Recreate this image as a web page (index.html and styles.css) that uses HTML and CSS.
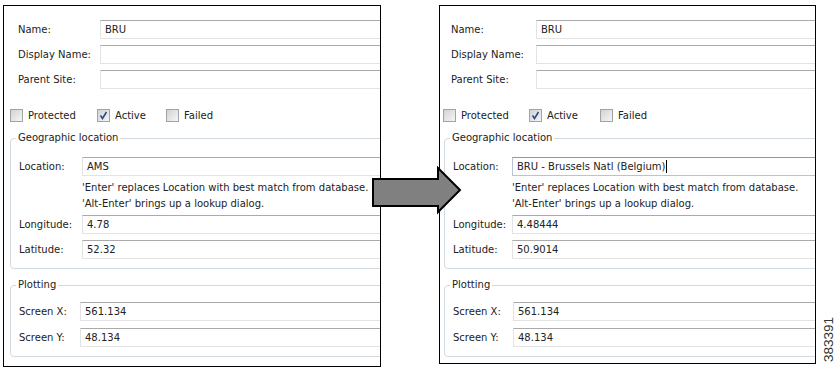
FILE: index.html
```html
<!DOCTYPE html>
<html lang="en">
<head>
    <meta charset="UTF-8">
    <title>Site properties - location lookup</title>
    <link rel="stylesheet" href="styles.css">
</head>
<body>
    <div class="figure">
        <section class="panel panel--before">
            <div class="form">
                <div class="fields">
                    <span class="field-label">Name:</span>
                    <div class="text-field">BRU</div>
                    <span class="field-label">Display Name:</span>
                    <div class="text-field"></div>
                    <span class="field-label">Parent Site:</span>
                    <div class="text-field"></div>
                </div>

                <div class="checks">
                    <span class="check"><span class="check-box"></span>Protected</span>
                    <span class="check"><span class="check-box is-checked"><svg viewBox="0 0 11 11"><path d="M2.5 5.5 L4.5 8.5 L8.5 2"/></svg></span>Active</span>
                    <span class="check"><span class="check-box"></span>Failed</span>
                </div>

                <fieldset class="group group--geo">
                    <legend>Geographic location</legend>
                    <div class="group-grid">
                        <span class="field-label">Location:</span>
                        <div class="text-field">AMS</div>
                        <p class="hint">'Enter' replaces Location with best match from database.<br>'Alt-Enter' brings up a lookup dialog.</p>
                        <span class="field-label row-lon">Longitude:</span>
                        <div class="text-field row-lon">4.78</div>
                        <span class="field-label row-lat">Latitude:</span>
                        <div class="text-field row-lat">52.32</div>
                    </div>
                </fieldset>

                <fieldset class="group group--plot">
                    <legend>Plotting</legend>
                    <div class="group-grid">
                        <span class="field-label">Screen X:</span>
                        <div class="text-field">561.134</div>
                        <span class="field-label row-y">Screen Y:</span>
                        <div class="text-field row-y">48.134</div>
                    </div>
                </fieldset>
            </div>
        </section>

        <!-- arrow sits on top of both panel borders -->
        <svg class="arrow" viewBox="0 0 92 50" width="92" height="50">
            <polygon points="2,13 67,13 67,2 89,24 67,46 67,40 2,40"/>
        </svg>

        <section class="panel panel--after">
            <div class="form">
                <div class="fields">
                    <span class="field-label">Name:</span>
                    <div class="text-field">BRU</div>
                    <span class="field-label">Display Name:</span>
                    <div class="text-field"></div>
                    <span class="field-label">Parent Site:</span>
                    <div class="text-field"></div>
                </div>

                <div class="checks">
                    <span class="check"><span class="check-box"></span>Protected</span>
                    <span class="check"><span class="check-box is-checked"><svg viewBox="0 0 11 11"><path d="M2.5 5.5 L4.5 8.5 L8.5 2"/></svg></span>Active</span>
                    <span class="check"><span class="check-box"></span>Failed</span>
                </div>

                <fieldset class="group group--geo">
                    <legend>Geographic location</legend>
                    <div class="group-grid">
                        <span class="field-label">Location:</span>
                        <div class="text-field is-focused">BRU - Brussels Natl (Belgium)<span class="caret"></span></div>
                        <p class="hint">'Enter' replaces Location with best match from database.<br>'Alt-Enter' brings up a lookup dialog.</p>
                        <span class="field-label row-lon">Longitude:</span>
                        <div class="text-field row-lon">4.48444</div>
                        <span class="field-label row-lat">Latitude:</span>
                        <div class="text-field row-lat">50.9014</div>
                    </div>
                </fieldset>

                <fieldset class="group group--plot">
                    <legend>Plotting</legend>
                    <div class="group-grid">
                        <span class="field-label">Screen X:</span>
                        <div class="text-field">561.134</div>
                        <span class="field-label row-y">Screen Y:</span>
                        <div class="text-field row-y">48.134</div>
                    </div>
                </fieldset>
            </div>
        </section>

        <span class="figure-id">383391</span>
    </div>
</body>
</html>
```

FILE: styles.css
```css
:root {
    --texto: #222222;
    --borde-campo: #e3e3e3;
    --borde-campo-top: #aaaaaa;
    --borde-grupo: #d3dadf;
}

* {
    margin: 0;
    padding: 0;
    box-sizing: border-box;
}

body {
    background: #fff;
    font-family: "DejaVu Sans", Verdana, sans-serif;
    font-size: 10px;
    color: var(--texto);
}

.figure {
    position: relative;
    display: flex;
    align-items: flex-start;
    padding: 5px 0 0 3px;
    width: 840px;
    height: 374px;
}

.panel {
    border: 1px solid #000;
    background: #fff;
    overflow: hidden;
    flex: none;
}

.panel--before {
    width: 378px;
    height: 362px;
}

.panel--after {
    width: 377px;
    height: 359px;
    margin-left: 58px;
}

.form {
    width: 640px;
}

/* top rows */
.fields {
    display: grid;
    grid-template-columns: 82px 1fr;
    row-gap: 6px;
    align-items: center;
    padding: 14px 0 0 14px;
}

.field-label {
    white-space: nowrap;
    line-height: 19px;
}

.text-field {
    height: 19px;
    line-height: 17px;
    padding: 0 4px;
    border: 1px solid var(--borde-campo);
    border-top-color: var(--borde-campo-top);
    background: #fff;
    white-space: nowrap;
}

.text-field.is-focused {
    border-color: #b4c6d6;
    border-top-color: #7f9db9;
}

.caret {
    display: inline-block;
    width: 1px;
    height: 13px;
    background: #000;
    vertical-align: -3px;
    margin-left: 1px;
}

/* checkboxes */
.checks {
    display: grid;
    grid-template-columns: 87px 69px auto;
    margin-top: 19px;
    padding-left: 6px;
    line-height: 15px;
}

.check {
    display: flex;
    align-items: center;
    gap: 5px;
}

.check-box {
    width: 13px;
    height: 13px;
    border: 1px solid #a3a3a3;
    background: linear-gradient(135deg, #d2d2d2, #f6f6f6);
    display: flex;
    align-items: center;
    justify-content: center;
}

.check-box svg {
    width: 11px;
    height: 11px;
    fill: none;
    stroke: #2c4d86;
    stroke-width: 1.6;
}

/* group boxes */
.group {
    border: 1px solid var(--borde-grupo);
    border-radius: 4px;
    margin-left: 6px;
    padding: 12px 0 9px 8px;
    width: 620px;
}

.group legend {
    line-height: 14px;
    padding: 0 2px;
    margin-left: -3px;
}

.group--geo {
    margin-top: 8px;
}

.group--plot {
    margin-top: 9px;
    padding-top: 10px;
}

.group-grid {
    display: grid;
    align-items: center;
}

.group--geo .group-grid {
    grid-template-columns: 63px 1fr;
}

.group--plot .group-grid {
    grid-template-columns: 61px 1fr;
}

.hint {
    grid-column: 2;
    line-height: 16px;
    margin-top: 4px;
    white-space: nowrap;
}

.row-lon {
    margin-top: 3px;
}

.row-lat {
    margin-top: 6px;
}

.row-y {
    margin-top: 7px;
}

/* right panel is cropped a little tighter */
.panel--after .fields {
    padding-left: 11px;
    grid-template-columns: 85px 1fr;
}

.panel--after .checks {
    padding-left: 3px;
    grid-template-columns: 86px 71px auto;
}

.panel--after .group {
    margin-left: 4px;
}

.panel--after .group--geo .group-grid {
    grid-template-columns: 59px 1fr;
}

.panel--after .group--plot .group-grid {
    grid-template-columns: 60px 1fr;
}

.arrow {
    position: absolute;
    left: 371px;
    top: 166px;
    z-index: 2;
}

.arrow polygon {
    fill: #808080;
    stroke: #000;
    stroke-width: 2;
    stroke-linejoin: miter;
}

.figure-id {
    align-self: flex-end;
    margin: 0 0 12px 6px;
    writing-mode: vertical-rl;
    transform: rotate(180deg);
    font-family: "Liberation Sans", Arial, sans-serif;
    font-size: 13.5px;
    line-height: 14px;
    color: #333;
}
```
